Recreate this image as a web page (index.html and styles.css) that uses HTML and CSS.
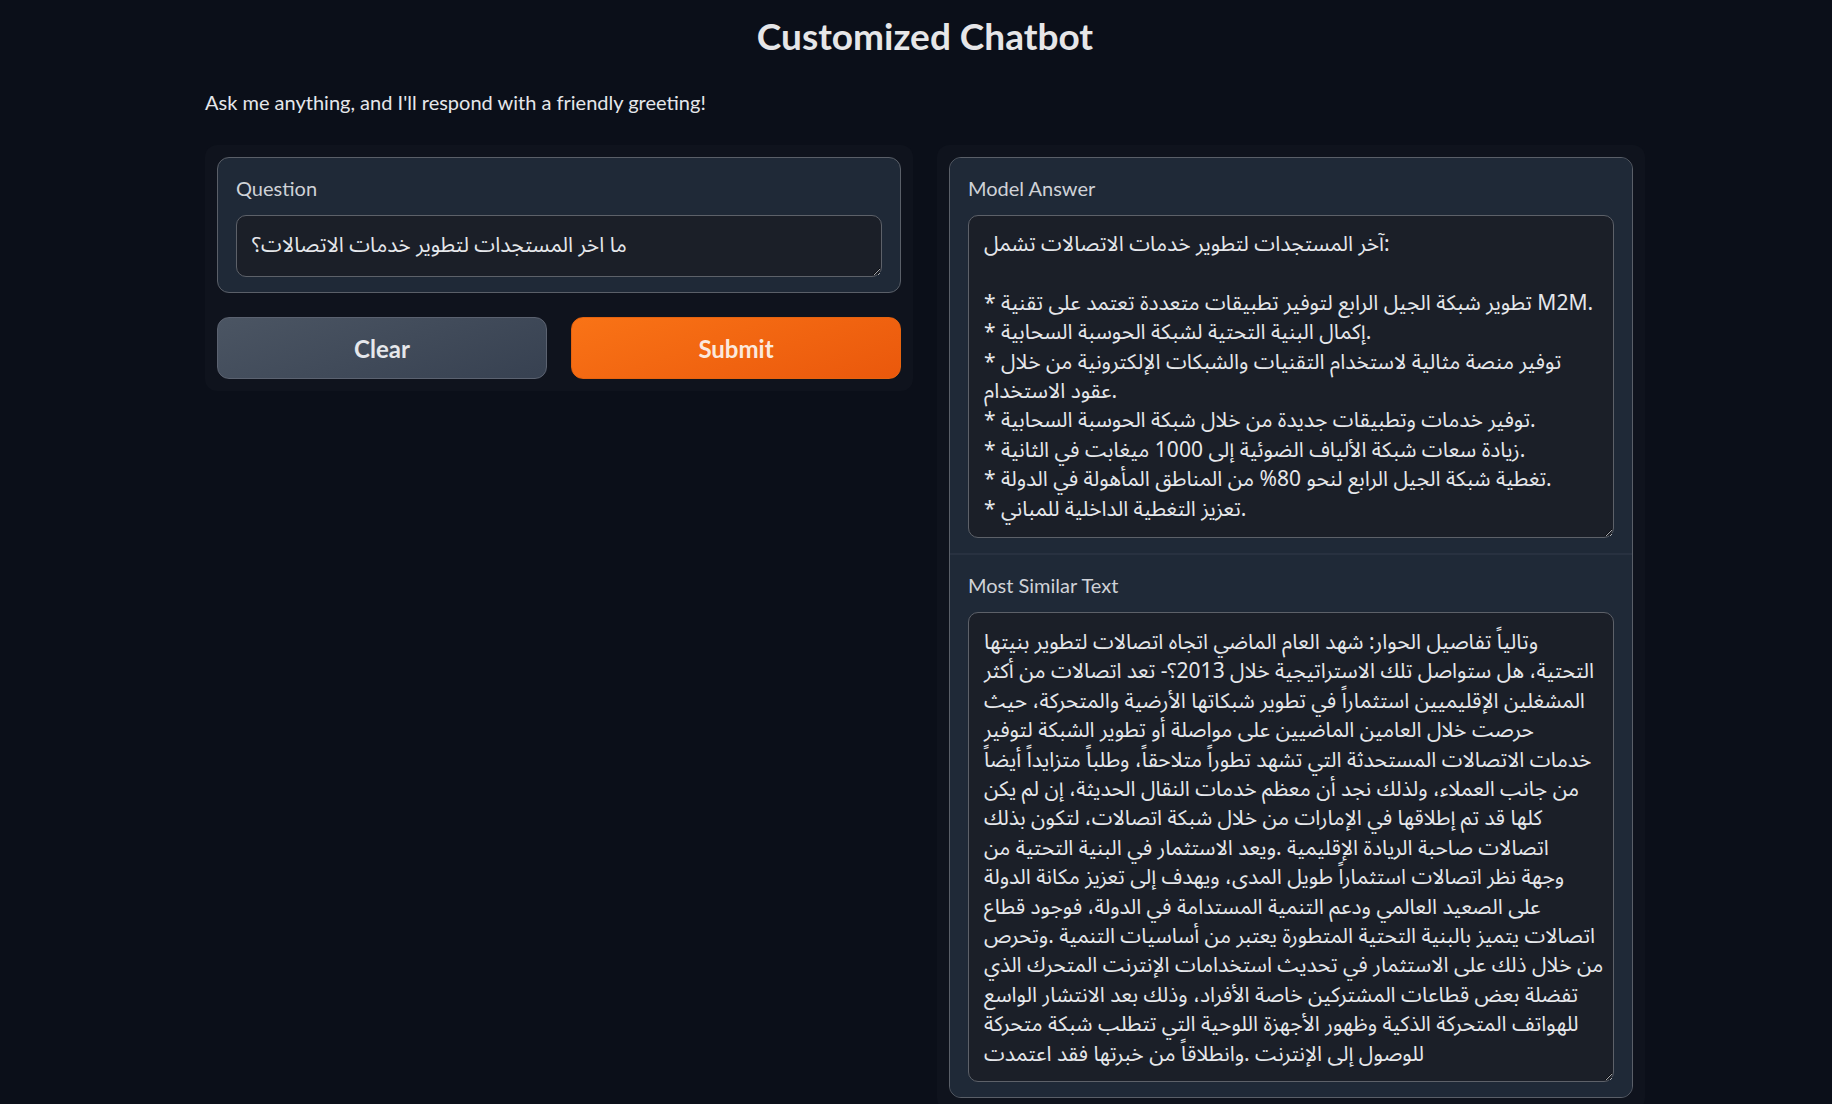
FILE: index.html
```html
<!DOCTYPE html>
<html lang="en">
<head>
<meta charset="utf-8">
<title>Customized Chatbot</title>
<link rel="stylesheet" href="styles.css">
</head>
<body>
<div class="app">
  <h1 class="title">Customized Chatbot</h1>
  <p class="desc">Ask me anything, and I'll respond with a friendly greeting!</p>
  <div class="row">
    <div class="panel">
      <div class="block">
        <label class="field">
          <span class="label">Question</span>
          <textarea class="input plain q" spellcheck="false">ما اخر المستجدات لتطوير خدمات الاتصالات؟</textarea>
        </label>
      </div>
      <div class="buttons">
        <button class="btn secondary">Clear</button>
        <button class="btn primary">Submit</button>
      </div>
    </div>
    <div class="panel">
      <div class="form">
        <div class="block">
          <label class="field">
            <span class="label">Model Answer</span>
            <textarea class="input answer" wrap="off" spellcheck="false">آخر المستجدات لتطوير خدمات الاتصالات تشمل:

* تطوير شبكة الجيل الرابع لتوفير تطبيقات متعددة تعتمد على تقنية M2M.
* إكمال البنية التحتية لشبكة الحوسبة السحابية.
* توفير منصة مثالية لاستخدام التقنيات والشبكات الإلكترونية من خلال
عقود الاستخدام.
* توفير خدمات وتطبيقات جديدة من خلال شبكة الحوسبة السحابية.
* زيادة سعات شبكة الألياف الضوئية إلى 1000 ميغابت في الثانية.
* تغطية شبكة الجيل الرابع لنحو 80% من المناطق المأهولة في الدولة.
* تعزيز التغطية الداخلية للمباني.</textarea>
          </label>
        </div>
        <div class="block">
          <label class="field">
            <span class="label">Most Similar Text</span>
            <textarea class="input similar" wrap="off" spellcheck="false">وتالياً تفاصيل الحوار: شهد العام الماضي اتجاه اتصالات لتطوير بنيتها
التحتية، هل ستواصل تلك الاستراتيجية خلال 2013؟- تعد اتصالات من أكثر
المشغلين الإقليميين استثماراً في تطوير شبكاتها الأرضية والمتحركة، حيث
حرصت خلال العامين الماضيين على مواصلة أو تطوير الشبكة لتوفير
خدمات الاتصالات المستحدثة التي تشهد تطوراً متلاحقاً، وطلباً متزايداً أيضاً
من جانب العملاء، ولذلك نجد أن معظم خدمات النقال الحديثة، إن لم يكن
كلها قد تم إطلاقها في الإمارات من خلال شبكة اتصالات، لتكون بذلك
اتصالات صاحبة الريادة الإقليمية .ويعد الاستثمار في البنية التحتية من
وجهة نظر اتصالات استثماراً طويل المدى، ويهدف إلى تعزيز مكانة الدولة
على الصعيد العالمي ودعم التنمية المستدامة في الدولة، فوجود قطاع
اتصالات يتميز بالبنية التحتية المتطورة يعتبر من أساسيات التنمية .وتحرص
من خلال ذلك على الاستثمار في تحديث استخدامات الإنترنت المتحرك الذي
تفضلة بعض قطاعات المشتركين خاصة الأفراد، وذلك بعد الانتشار الواسع
للهواتف المتحركة الذكية وظهور الأجهزة اللوحية التي تتطلب شبكة متحركة
للوصول إلى الإنترنت .وانطلاقاً من خبرتها فقد اعتمدت</textarea>
          </label>
        </div>
      </div>
    </div>
  </div>
</div>
</body>
</html>
```
FILE: styles.css
```css
html, body {
  margin: 0;
  padding: 0;
  background: #0b0f19;
  overflow: hidden;
}

body {
  font-family: "Lato", "Noto Sans Arabic", "DejaVu Sans", sans-serif;
  color: #e5e7eb;
}

.app {
  width: 1440px;
  margin-left: 205px;
}

.title {
  margin: 0;
  padding-top: 12px;
  font-size: 37px;
  line-height: 48px;
  font-weight: 700;
  text-align: center;
  color: #e6e6e8;
}

.desc {
  margin: 27px 0 0;
  font-size: 20px;
  line-height: 30px;
  color: #e5e7eb;
}

.row {
  display: flex;
  gap: 24px;
  margin-top: 28px;
  align-items: flex-start;
}

.panel {
  flex: 1;
  background: #0f131d;
  border-radius: 12px;
  padding: 12px;
  display: flex;
  flex-direction: column;
  gap: 24px;
}

.form {
  display: flex;
  flex-direction: column;
  gap: 2px;
  background: #283140;
  border: 1px solid #5a5f68;
  border-radius: 12px;
  overflow: hidden;
}

.block {
  background: #1f2937;
  border: 1px solid #5a5f68;
  border-radius: 12px;
  padding: 16px 18px 15px;
}

.form .block {
  border: none;
  border-radius: 0;
}

.field {
  display: flex;
  flex-direction: column;
}

.label {
  font-size: 20px;
  line-height: 28px;
  color: #cfd2d7;
  margin-bottom: 13px;
}

.input {
  box-sizing: border-box;
  width: 100%;
  margin: 0;
  background: #1b1f28;
  border: 1px solid #5d6169;
  border-radius: 10px;
  padding: 14px 15px 13px;
  font-family: "Noto Sans Arabic", "Lato", "DejaVu Sans", sans-serif;
  font-size: 21px;
  line-height: 29.4px;
  color: #e5e7eb;
  color-scheme: dark;
  resize: vertical;
  overflow: hidden;
  outline: none;
  white-space: pre;
}

.plain {
  unicode-bidi: plaintext;
  text-align: left;
  white-space: pre-wrap;
}

.q {
  height: 62px;
  padding-top: 15px;
}

.answer {
  height: 323px;
}

.similar {
  height: 470px;
  padding-top: 15px;
}

.buttons {
  display: flex;
  gap: 24px;
}

.btn {
  flex: 1;
  height: 62px;
  border-radius: 12px;
  font-family: "Lato", sans-serif;
  font-size: 24px;
  font-weight: 700;
  cursor: pointer;
}

.secondary {
  background: linear-gradient(160deg, #4b5563, #374151);
  border: 1px solid #5b6270;
  color: #e5e7eb;
}

.primary {
  background: linear-gradient(160deg, #f97316, #ea580c);
  border: 1px solid #e5630f;
  color: #fbe9dd;
}
```
